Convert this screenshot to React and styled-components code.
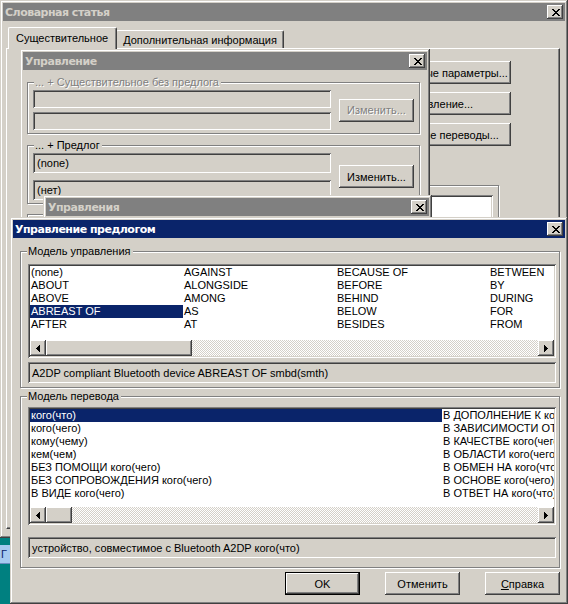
import React from 'react';
import styled, { createGlobalStyle, css } from 'styled-components';

const FACE = '#d4d0c8';

const GlobalStyle = createGlobalStyle`
  html, body {
    margin: 0;
    padding: 0;
    background: #008080;
  }
  body {
    font-family: "Liberation Sans", Arial, sans-serif;
    font-size: 11px;
    color: #000;
  }
  * { box-sizing: border-box; }
`;

const raisedWindow = css`
  box-shadow: inset -1px -1px #404040, inset 1px 1px ${FACE},
    inset -2px -2px #808080, inset 2px 2px #fff;
`;
const raisedButton = css`
  box-shadow: inset -1px -1px #404040, inset 1px 1px #fff,
    inset -2px -2px #808080, inset 2px 2px ${FACE};
`;
const sunken = css`
  box-shadow: inset 1px 1px #808080, inset -1px -1px #fff,
    inset 2px 2px #404040, inset -2px -2px ${FACE};
`;

const Desktop = styled.div`
  position: relative;
  width: 568px;
  height: 604px;
  overflow: hidden;
  background: #008080;
`;

const Frame = styled.div`
  position: absolute;
  left: ${(p) => p.$x}px;
  top: ${(p) => p.$y}px;
  width: ${(p) => p.$w}px;
  height: ${(p) => p.$h}px;
  background: ${FACE};
  padding: 3px;
  display: flex;
  flex-direction: column;
  ${raisedWindow}
`;

const TitleBar = styled.div`
  height: 18px;
  flex-shrink: 0;
  display: flex;
  align-items: center;
  justify-content: space-between;
  padding: 0 2px 0 2px;
  background: ${(p) => (p.$active ? '#0a246a' : '#808080')};
  color: ${(p) => (p.$active ? '#fff' : FACE)};
  font-family: "DejaVu Sans", Verdana, sans-serif;
  font-weight: bold;
  font-size: 11px;
  letter-spacing: -0.5px;
  white-space: nowrap;
  overflow: hidden;
`;

const CloseBtn = styled.div`
  width: 16px;
  height: 14px;
  flex-shrink: 0;
  background: ${FACE};
  display: flex;
  align-items: center;
  justify-content: center;
  padding-left: 1px;
  ${raisedButton}
`;

const Cross = () => (
  <svg width="8" height="7" viewBox="0 0 8 7" shapeRendering="crispEdges">
    <path
      fill="#000"
      d="M0 0h2v1h-2z M6 0h2v1h-2z M1 1h2v1h-2z M5 1h2v1h-2z M2 2h4v1h-4z M3 3h2v1h-2z M2 4h4v1h-4z M1 5h2v1h-2z M5 5h2v1h-2z M0 6h2v1h-2z M6 6h2v1h-2z"
    />
  </svg>
);

function Win({ title, active, x, y, w, h, children }) {
  return (
    <Frame $x={x} $y={y} $w={w} $h={h}>
      <TitleBar $active={active}>
        <span>{title}</span>
        <CloseBtn>
          <Cross />
        </CloseBtn>
      </TitleBar>
      {children}
    </Frame>
  );
}

/* ---------- common controls ---------- */

const GroupBox = styled.div`
  position: relative;
  border: 1px solid #808080;
  box-shadow: 1px 1px 0 #fff, inset 1px 1px 0 #fff;
  margin: ${(p) => p.$m || '0'};
  padding: ${(p) => p.$pad || '0'};
  display: flex;
  flex-direction: ${(p) => (p.$row ? 'row' : 'column')};
  align-items: ${(p) => (p.$row ? 'center' : 'stretch')};
  gap: ${(p) => p.$gap || 0}px;
`;

const Legend = styled.span`
  position: absolute;
  top: -7px;
  left: 6px;
  padding: 0 2px 0 1px;
  line-height: 13px;
  background: ${FACE};
  white-space: nowrap;
  color: ${(p) => (p.$disabled ? '#808080' : '#000')};
  text-shadow: ${(p) => (p.$disabled ? '1px 1px 0 #fff' : 'none')};
`;

const Field = styled.div`
  height: ${(p) => p.$h || 21}px;
  width: ${(p) => (p.$w ? `${p.$w}px` : 'auto')};
  margin-top: ${(p) => p.$mt || 0}px;
  background: ${(p) => (p.$white ? '#fff' : FACE)};
  padding: 0 4px;
  display: flex;
  align-items: center;
  white-space: nowrap;
  overflow: hidden;
  flex-shrink: 0;
  ${sunken}
`;

const Button = styled.div`
  width: ${(p) => p.$w || 75}px;
  height: ${(p) => p.$h || 23}px;
  flex-shrink: 0;
  background: ${FACE};
  display: flex;
  align-items: center;
  justify-content: center;
  white-space: nowrap;
  overflow: hidden;
  color: ${(p) => (p.$disabled ? '#808080' : '#000')};
  text-shadow: ${(p) => (p.$disabled ? '1px 1px 0 #fff' : 'none')};
  ${raisedButton}
  ${(p) =>
    p.$default &&
    css`
      border: 1px solid #000;
    `}
`;

const FieldStack = styled.div`
  display: flex;
  flex-direction: column;
  gap: ${(p) => p.$gap}px;
`;

/* ---------- list box ---------- */

const ListBox = styled.div`
  height: ${(p) => p.$h}px;
  background: #fff;
  padding: 2px;
  display: flex;
  flex-direction: column;
  flex-shrink: 0;
  ${sunken}
`;

const ListGrid = styled.div`
  flex: 1;
  display: grid;
  grid-auto-flow: column;
  grid-template-rows: repeat(${(p) => p.$rows}, 13px);
  grid-auto-columns: ${(p) => p.$col}px;
  overflow: hidden;
  white-space: nowrap;
`;

const Item = styled.div`
  height: 13px;
  line-height: 13px;
  padding-left: 1px;
  overflow: hidden;
  background: ${(p) => (p.$sel ? '#0a246a' : 'transparent')};
  color: ${(p) => (p.$sel ? '#fff' : '#000')};
`;

const HScroll = styled.div`
  height: 16px;
  display: flex;
  flex-shrink: 0;
`;

const ScrollBtn = styled.div`
  width: 16px;
  height: 16px;
  flex-shrink: 0;
  background: ${FACE};
  display: flex;
  align-items: center;
  justify-content: center;
  ${raisedButton}
`;

const Thumb = styled.div`
  width: ${(p) => p.$w}px;
  height: 16px;
  flex-shrink: 0;
  background: ${FACE};
  ${raisedButton}
`;

const Track = styled.div`
  flex: 1;
  background: repeating-conic-gradient(#fff 0 25%, ${FACE} 0 50%) 0 0 / 2px 2px;
`;

const Arrow = ({ dir }) => (
  <svg width="4" height="7" viewBox="0 0 4 7" shapeRendering="crispEdges">
    {dir === 'left' ? (
      <path fill="#000" d="M3 0h1v7h-1z M2 1h1v5h-1z M1 2h1v3h-1z M0 3h1v1h-1z" />
    ) : (
      <path fill="#000" d="M0 0h1v7h-1z M1 1h1v5h-1z M2 2h1v3h-1z M3 3h1v1h-1z" />
    )}
  </svg>
);

function List({ h, rows, col, items, selected, thumb }) {
  return (
    <ListBox $h={h}>
      <ListGrid $rows={rows} $col={col}>
        {items.map((t) => (
          <Item key={t} $sel={t === selected}>
            {t}
          </Item>
        ))}
      </ListGrid>
      <HScroll>
        <ScrollBtn>
          <Arrow dir="left" />
        </ScrollBtn>
        <Thumb $w={thumb} />
        <Track />
        <ScrollBtn>
          <Arrow dir="right" />
        </ScrollBtn>
      </HScroll>
    </ListBox>
  );
}

/* ---------- main window: tabs ---------- */

const MainBody = styled.div`
  flex: 1;
  display: flex;
  flex-direction: column;
  margin: 6px 5px 6px 3px;
`;

const TabStrip = styled.div`
  display: flex;
  align-items: flex-end;
  height: 21px;
  padding-left: 3px;
`;

const Tab = styled.div`
  position: relative;
  z-index: ${(p) => (p.$active ? 1 : 0)};
  height: ${(p) => (p.$active ? 22 : 18)}px;
  margin: 0 ${(p) => (p.$active ? -1 : 0)}px ${(p) => (p.$active ? -1 : 0)}px
    ${(p) => (p.$active ? -1 : 0)}px;
  padding: ${(p) => (p.$active ? '3px 8px 0 7px' : '2px 6px 0 6px')};
  background: ${FACE};
  border-top: 1px solid #fff;
  border-left: 1px solid #fff;
  border-right: 1px solid #404040;
  border-radius: 2px 2px 0 0;
  box-shadow: inset -1px 0 #808080;
  white-space: nowrap;
  line-height: 14px;
`;

const TabPanel = styled.div`
  flex: 1;
  border: 1px solid;
  border-color: #fff #404040 #404040 #fff;
  box-shadow: inset -1px -1px #808080;
  display: flex;
  justify-content: flex-end;
  padding: 12px 48px 0 0;
`;

const SideColumn = styled.div`
  display: flex;
  flex-direction: column;
  align-items: flex-end;
  gap: 8px;
`;

const SmallBox = styled.div`
  width: 200px;
  height: 60px;
  margin: 31px 12px 0 0;
  border: 1px solid #808080;
  box-shadow: 1px 1px 0 #fff, inset 1px 1px 0 #fff;
  display: flex;
  justify-content: flex-end;
  padding: 9px 5px 0 0;
`;

/* ---------- dialogs ---------- */

const DialogBody = styled.div`
  flex: 1;
  display: flex;
  flex-direction: column;
  padding: ${(p) => p.$pad};
`;

const ButtonRow = styled.div`
  display: flex;
  justify-content: flex-end;
  gap: 25px;
  margin: 4px 5px 0 0;
`;

const Under = styled.span`
  text-decoration: underline;
`;

const Stub = styled.div`
  position: absolute;
  left: 0;
  top: 545px;
  width: 10px;
  height: 19px;
  background: #a6caf0;
  color: #0a246a;
  padding: 3px 0 0 1px;
  overflow: hidden;
  border-bottom: 1px solid #6a8cc0;
`;

const model1 = [
  '(none)', 'ABOUT', 'ABOVE', 'ABREAST OF', 'AFTER',
  'AGAINST', 'ALONGSIDE', 'AMONG', 'AS', 'AT',
  'BECAUSE OF', 'BEFORE', 'BEHIND', 'BELOW', 'BESIDES',
  'BETWEEN', 'BY', 'DURING', 'FOR', 'FROM',
];

const model2 = [
  'кого(что)', 'кого(чего)', 'кому(чему)', 'кем(чем)',
  'БЕЗ ПОМОЩИ кого(чего)', 'БЕЗ СОПРОВОЖДЕНИЯ кого(чего)', 'В ВИДЕ кого(чего)',
  'В ДОПОЛНЕНИЕ К кому(чему)', 'В ЗАВИСИМОСТИ ОТ кого(чего)', 'В КАЧЕСТВЕ кого(чего)',
  'В ОБЛАСТИ кого(чего)', 'В ОБМЕН НА кого(что)', 'В ОСНОВЕ кого(чего)', 'В ОТВЕТ НА кого(что)',
];

export default function App() {
  return (
    <>
      <GlobalStyle />
      <Desktop>
        <Stub>Г</Stub>

        <Win title="Словарная статья" x={0} y={0} w={568} h={538}>
          <MainBody>
            <TabStrip>
              <Tab $active>Существительное</Tab>
              <Tab>Дополнительная информация</Tab>
            </TabStrip>
            <TabPanel>
              <SideColumn>
                <Button $w={146} $h={23}>Специальные параметры...</Button>
                <Button $w={146} $h={23}>Управление...</Button>
                <Button $w={146} $h={23}>Возможные переводы...</Button>
                <SmallBox>
                  <Field $white $w={100} $h={26} />
                </SmallBox>
              </SideColumn>
            </TabPanel>
          </MainBody>
        </Win>

        <Win title="Управление" x={20} y={49} w={410} h={230}>
          <DialogBody $pad="12px 7px 0 4px">
            <GroupBox $row $gap={8} $pad="7px 5px 3px 5px">
              <Legend $disabled>... + Существительное без предлога</Legend>
              <FieldStack $gap={4}>
                <Field $w={298} $h={18} />
                <Field $w={298} $h={18} />
              </FieldStack>
              <Button $w={75} $h={23} $disabled>
                Изменить...
              </Button>
            </GroupBox>
            <GroupBox $row $gap={8} $m="11px 0 0 0" $pad="7px 5px 3px 5px">
              <Legend>... + Предлог</Legend>
              <FieldStack $gap={7}>
                <Field $w={298} $h={20}>(none)</Field>
                <Field $w={298} $h={20}>(нет)</Field>
              </FieldStack>
              <Button $w={75} $h={23}>Изменить...</Button>
            </GroupBox>
            <GroupBox $m="10px 0 0 0" $pad="20px 0 0 0">
              <Legend> </Legend>
            </GroupBox>
          </DialogBody>
        </Win>

        <Win title="Управления" x={43} y={195} w={389} h={120} />

        <Win title="Управление предлогом" active x={10} y={217} w={558} h={387}>
          <DialogBody $pad="13px 0 0 0">
            <GroupBox $m="0 5px 0 7px" $pad="12px 3px 4px 7px">
              <Legend>Модель управления</Legend>
              <List h={94} rows={5} col={153} items={model1} selected="ABREAST OF" thumb={146} />
              <Field $mt={4}>A2DP compliant Bluetooth device ABREAST OF smbd(smth)</Field>
            </GroupBox>
            <GroupBox $m="8px 5px 0 7px" $pad="10px 3px 9px 7px">
              <Legend>Модель перевода</Legend>
              <List h={118} rows={7} col={412} items={model2} selected="кого(что)" thumb={26} />
              <Field $mt={12}>устройство, совместимое с Bluetooth A2DP кого(что)</Field>
            </GroupBox>
            <ButtonRow>
              <Button $default>OK</Button>
              <Button>Отменить</Button>
              <Button>
                <Under>С</Under>правка
              </Button>
            </ButtonRow>
          </DialogBody>
        </Win>
      </Desktop>
    </>
  );
}
